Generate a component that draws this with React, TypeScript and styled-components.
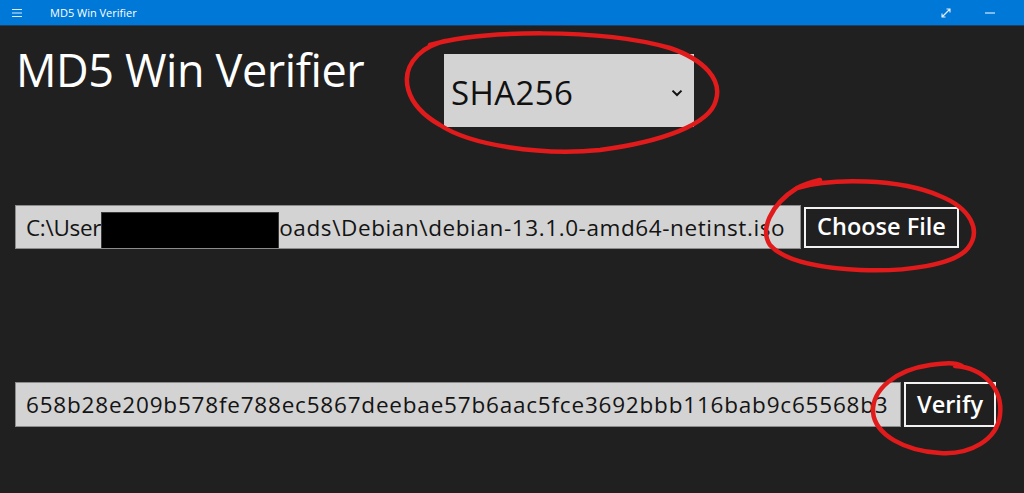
import React from "react";
import styled, { createGlobalStyle } from "styled-components";

const GlobalStyle = createGlobalStyle`
  html, body {
    margin: 0;
    padding: 0;
    background: #202020;
  }
  body {
    font-family: "Open Sans", "Noto Sans", sans-serif;
  }
`;

const Page = styled.div`
  position: relative;
  width: 1024px;
  height: 493px;
  overflow: hidden;
  background: #202020;
  display: flex;
  flex-direction: column;
`;

const TitleBar = styled.div`
  height: 25px;
  background: #0078d7;
  border-bottom: 1px solid #1c3f63;
  display: flex;
  align-items: center;
  color: #ffffff;
  font-size: 11px;
`;

const MenuButton = styled.div`
  width: 34px;
  display: flex;
  justify-content: center;
`;

const WindowTitle = styled.span`
  margin-left: 16px;
`;

const TitleSpacer = styled.div`
  flex: 1;
`;

const CaptionButton = styled.div<{ $width?: number }>`
  width: ${(p) => p.$width ?? 44}px;
  height: 25px;
  display: flex;
  align-items: center;
  justify-content: center;
`;

const Content = styled.main`
  display: flex;
  flex-direction: column;
  padding-left: 15px;
`;

const HeaderRow = styled.div`
  display: flex;
  align-items: flex-start;
  height: 102px;
`;

const Heading = styled.h1`
  margin: 0;
  flex: 0 0 428px;
  font-weight: 400;
  font-size: 45px;
  line-height: 48px;
  color: #ffffff;
  padding-top: 20px;
  padding-left: 1px;
  letter-spacing: -0.4px;
`;

const Dropdown = styled.div`
  margin-top: 28px;
  width: 250px;
  height: 73px;
  background: #d3d3d3;
  display: flex;
  align-items: center;
  justify-content: space-between;
  box-sizing: border-box;
  padding: 4px 11px 0 7px;
  color: #111111;
  font-size: 33px;
  letter-spacing: 0.4px;
`;

const FieldRow = styled.div<{ $top: number }>`
  display: flex;
  align-items: center;
  margin-top: ${(p) => p.$top}px;
`;

const TextBox = styled.div<{ $width: number; $height: number; $tracking: number }>`
  width: ${(p) => p.$width}px;
  height: ${(p) => p.$height}px;
  box-sizing: border-box;
  background: #d3d3d3;
  border: 1px solid #8c8c8c;
  display: flex;
  align-items: center;
  padding-left: 10px;
  color: #141414;
  font-size: 22.5px;
  letter-spacing: ${(p) => p.$tracking}px;
  white-space: nowrap;
  overflow: hidden;
`;

const TightText = styled.span`
  letter-spacing: -0.3px;
`;

const Redaction = styled.span`
  align-self: flex-end;
  flex: 0 0 178px;
  height: 37px;
  margin-bottom: -1px;
  background: #000000;
  border: 1px solid #3a3a3a;
  box-sizing: border-box;
`;

const ActionButton = styled.button<{ $width: number; $height: number }>`
  margin-left: 3px;
  width: ${(p) => p.$width}px;
  height: ${(p) => p.$height}px;
  background: #202020;
  border: 2px solid #f2f2f2;
  color: #ffffff;
  font-family: "Open Sans", "Noto Sans", sans-serif;
  font-weight: 600;
  font-size: 23.5px;
  padding: 0 0 2px 0;
  display: flex;
  align-items: center;
  justify-content: center;
`;

const Annotations = styled.svg`
  position: absolute;
  inset: 0;
  pointer-events: none;
`;

const Ink = styled.path`
  fill: none;
  stroke: #e11b1b;
  stroke-width: 4.5;
  stroke-linecap: round;
  stroke-linejoin: round;
`;

export default function App() {
  return (
    <Page>
      <GlobalStyle />
      <TitleBar>
        <MenuButton>
          <svg width="12" height="10" viewBox="0 0 12 10">
            <path d="M1 1.5h10M1 5h10M1 8.5h10" stroke="#dfe9f5" strokeWidth="1" />
          </svg>
        </MenuButton>
        <WindowTitle>MD5 Win Verifier</WindowTitle>
        <TitleSpacer />
        <CaptionButton>
          <svg width="12" height="12" viewBox="0 0 12 12">
            <path d="M2 10L10 2M6.5 2H10V5.5M2 6.5V10H5.5" stroke="#e6eef8" strokeWidth="1.1" fill="none" />
          </svg>
        </CaptionButton>
        <CaptionButton>
          <svg width="10" height="2" viewBox="0 0 10 2">
            <path d="M0 1h10" stroke="#ffffff" strokeWidth="1" />
          </svg>
        </CaptionButton>
        <CaptionButton $width={12} />
      </TitleBar>
      <Content>
        <HeaderRow>
          <Heading>MD5 Win Verifier</Heading>
          <Dropdown>
            <span>SHA256</span>
            <svg width="12" height="8" viewBox="0 0 12 8">
              <path d="M1.5 1.6L6 6L10.5 1.6" stroke="#111" strokeWidth="2" fill="none" />
            </svg>
          </Dropdown>
        </HeaderRow>
        <FieldRow $top={77}>
          <TextBox $width={786} $height={44} $tracking={0.6}>
            <TightText>C:\User</TightText>
            <Redaction />
            <span>oads\Debian\debian-13.1.0-amd64-netinst.iso</span>
          </TextBox>
          <ActionButton $width={155} $height={41}>Choose File</ActionButton>
        </FieldRow>
        <FieldRow $top={133}>
          <TextBox $width={886} $height={45} $tracking={0.8}>
            658b28e209b578fe788ec5867deebae57b6aac5fce3692bbb116bab9c65568b3
          </TextBox>
          <ActionButton $width={92} $height={45}>Verify</ActionButton>
        </FieldRow>
      </Content>
      <Annotations width="1024" height="493" viewBox="0 0 1024 493">
        <Ink d="M430 45 C480 30, 600 28, 670 48 C705 60, 722 80, 716 100 C710 125, 660 142, 600 150 C540 156, 470 145, 440 125 C405 105, 398 75, 418 55 C425 48, 432 44, 445 41" />
        <Ink d="M797 188 C830 178, 900 178, 940 196 C970 208, 982 230, 968 248 C955 265, 905 272, 860 270 C820 268, 785 262, 770 245 C760 230, 770 205, 797 188 C805 184, 812 182, 820 180" />
        <Ink d="M955 366 C985 368, 1003 390, 1000 415 C997 440, 970 455, 940 453 C905 451, 875 435, 873 412 C872 390, 895 370, 930 365 C945 363, 955 362, 962 366" />
      </Annotations>
    </Page>
  );
}
